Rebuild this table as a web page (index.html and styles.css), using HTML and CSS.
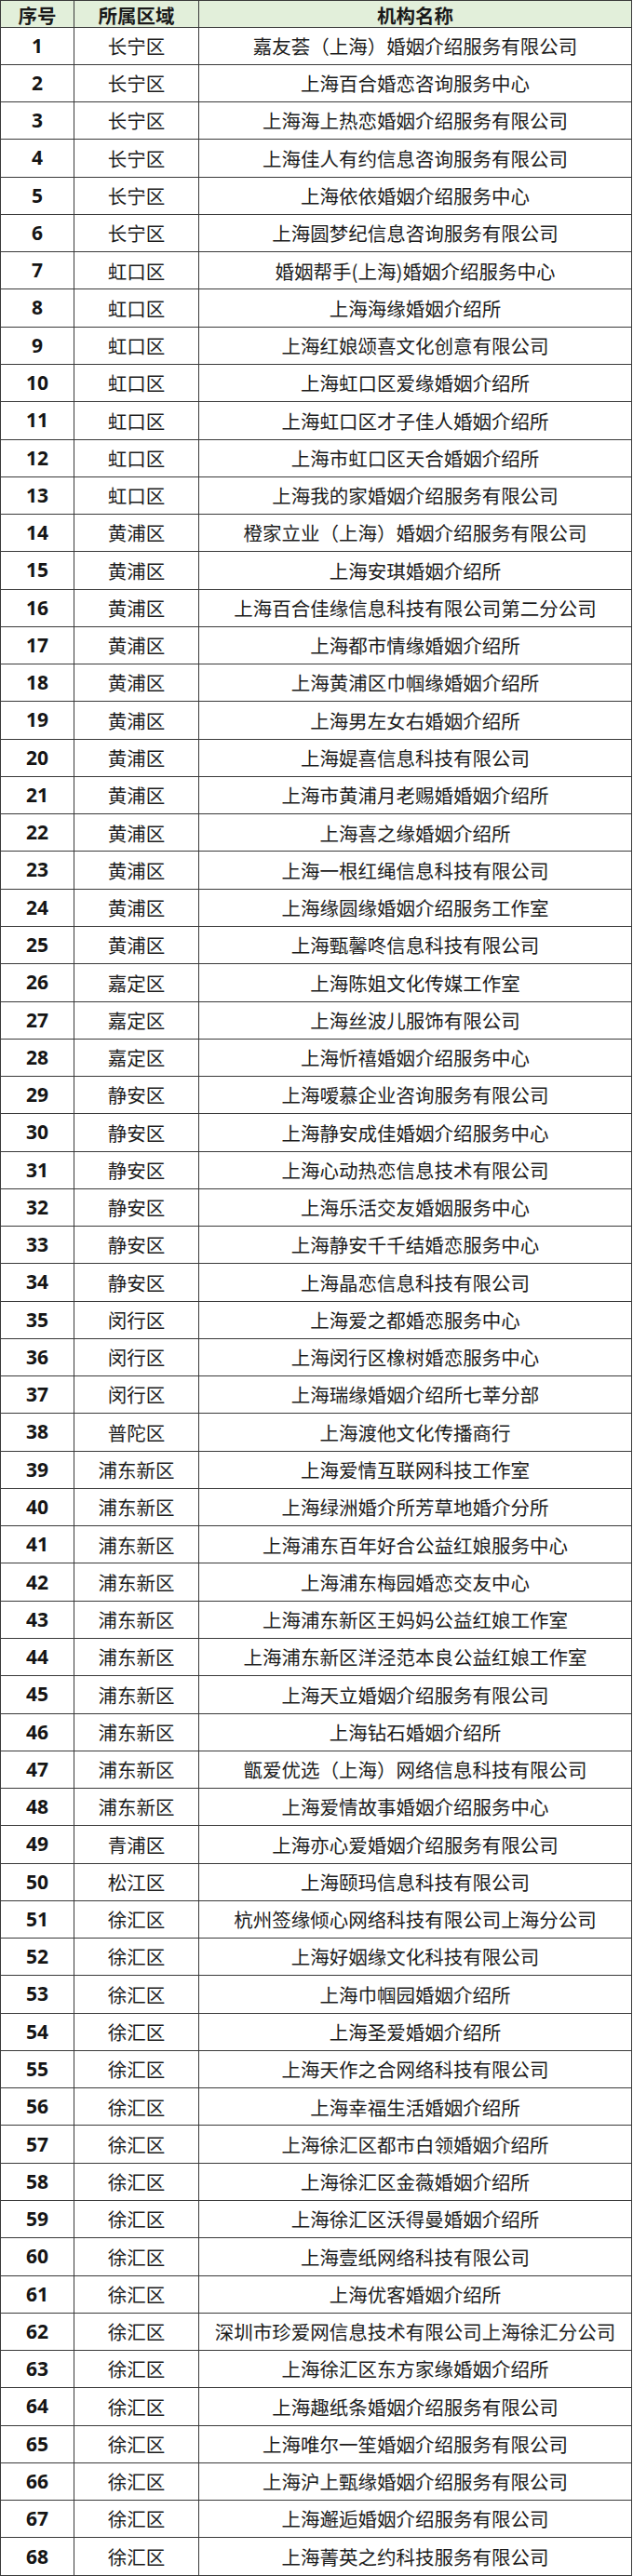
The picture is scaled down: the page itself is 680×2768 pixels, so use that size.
FILE: index.html
```html
<!DOCTYPE html>
<html lang="zh-CN">
<head>
<meta charset="utf-8">
<title>婚姻介绍机构名单</title>
<link rel="stylesheet" href="styles.css">
</head>
<body>
<table class="tbl">
<colgroup><col class="c-no"><col class="c-area"><col class="c-name"></colgroup>
<thead>
<tr><th>序号</th><th>所属区域</th><th>机构名称</th></tr>
</thead>
<tbody>
<tr><td class="no">1</td><td>长宁区</td><td>嘉友荟（上海）婚姻介绍服务有限公司</td></tr>
<tr><td class="no">2</td><td>长宁区</td><td>上海百合婚恋咨询服务中心</td></tr>
<tr><td class="no">3</td><td>长宁区</td><td>上海海上热恋婚姻介绍服务有限公司</td></tr>
<tr><td class="no">4</td><td>长宁区</td><td>上海佳人有约信息咨询服务有限公司</td></tr>
<tr><td class="no">5</td><td>长宁区</td><td>上海依依婚姻介绍服务中心</td></tr>
<tr><td class="no">6</td><td>长宁区</td><td>上海圆梦纪信息咨询服务有限公司</td></tr>
<tr><td class="no">7</td><td>虹口区</td><td>婚姻帮手(上海)婚姻介绍服务中心</td></tr>
<tr><td class="no">8</td><td>虹口区</td><td>上海海缘婚姻介绍所</td></tr>
<tr><td class="no">9</td><td>虹口区</td><td>上海红娘颂喜文化创意有限公司</td></tr>
<tr><td class="no">10</td><td>虹口区</td><td>上海虹口区爱缘婚姻介绍所</td></tr>
<tr><td class="no">11</td><td>虹口区</td><td>上海虹口区才子佳人婚姻介绍所</td></tr>
<tr><td class="no">12</td><td>虹口区</td><td>上海市虹口区天合婚姻介绍所</td></tr>
<tr><td class="no">13</td><td>虹口区</td><td>上海我的家婚姻介绍服务有限公司</td></tr>
<tr><td class="no">14</td><td>黄浦区</td><td>橙家立业（上海）婚姻介绍服务有限公司</td></tr>
<tr><td class="no">15</td><td>黄浦区</td><td>上海安琪婚姻介绍所</td></tr>
<tr><td class="no">16</td><td>黄浦区</td><td>上海百合佳缘信息科技有限公司第二分公司</td></tr>
<tr><td class="no">17</td><td>黄浦区</td><td>上海都市情缘婚姻介绍所</td></tr>
<tr><td class="no">18</td><td>黄浦区</td><td>上海黄浦区巾帼缘婚姻介绍所</td></tr>
<tr><td class="no">19</td><td>黄浦区</td><td>上海男左女右婚姻介绍所</td></tr>
<tr><td class="no">20</td><td>黄浦区</td><td>上海媞喜信息科技有限公司</td></tr>
<tr><td class="no">21</td><td>黄浦区</td><td>上海市黄浦月老赐婚婚姻介绍所</td></tr>
<tr><td class="no">22</td><td>黄浦区</td><td>上海喜之缘婚姻介绍所</td></tr>
<tr><td class="no">23</td><td>黄浦区</td><td>上海一根红绳信息科技有限公司</td></tr>
<tr><td class="no">24</td><td>黄浦区</td><td>上海缘圆缘婚姻介绍服务工作室</td></tr>
<tr><td class="no">25</td><td>黄浦区</td><td>上海甄馨咚信息科技有限公司</td></tr>
<tr><td class="no">26</td><td>嘉定区</td><td>上海陈姐文化传媒工作室</td></tr>
<tr><td class="no">27</td><td>嘉定区</td><td>上海丝波儿服饰有限公司</td></tr>
<tr><td class="no">28</td><td>嘉定区</td><td>上海忻禧婚姻介绍服务中心</td></tr>
<tr><td class="no">29</td><td>静安区</td><td>上海嗳慕企业咨询服务有限公司</td></tr>
<tr><td class="no">30</td><td>静安区</td><td>上海静安成佳婚姻介绍服务中心</td></tr>
<tr><td class="no">31</td><td>静安区</td><td>上海心动热恋信息技术有限公司</td></tr>
<tr><td class="no">32</td><td>静安区</td><td>上海乐活交友婚姻服务中心</td></tr>
<tr><td class="no">33</td><td>静安区</td><td>上海静安千千结婚恋服务中心</td></tr>
<tr><td class="no">34</td><td>静安区</td><td>上海晶恋信息科技有限公司</td></tr>
<tr><td class="no">35</td><td>闵行区</td><td>上海爱之都婚恋服务中心</td></tr>
<tr><td class="no">36</td><td>闵行区</td><td>上海闵行区橡树婚恋服务中心</td></tr>
<tr><td class="no">37</td><td>闵行区</td><td>上海瑞缘婚姻介绍所七莘分部</td></tr>
<tr><td class="no">38</td><td>普陀区</td><td>上海渡他文化传播商行</td></tr>
<tr><td class="no">39</td><td>浦东新区</td><td>上海爱情互联网科技工作室</td></tr>
<tr><td class="no">40</td><td>浦东新区</td><td>上海绿洲婚介所芳草地婚介分所</td></tr>
<tr><td class="no">41</td><td>浦东新区</td><td>上海浦东百年好合公益红娘服务中心</td></tr>
<tr><td class="no">42</td><td>浦东新区</td><td>上海浦东梅园婚恋交友中心</td></tr>
<tr><td class="no">43</td><td>浦东新区</td><td>上海浦东新区王妈妈公益红娘工作室</td></tr>
<tr><td class="no">44</td><td>浦东新区</td><td>上海浦东新区洋泾范本良公益红娘工作室</td></tr>
<tr><td class="no">45</td><td>浦东新区</td><td>上海天立婚姻介绍服务有限公司</td></tr>
<tr><td class="no">46</td><td>浦东新区</td><td>上海钻石婚姻介绍所</td></tr>
<tr><td class="no">47</td><td>浦东新区</td><td>甑爱优选（上海）网络信息科技有限公司</td></tr>
<tr><td class="no">48</td><td>浦东新区</td><td>上海爱情故事婚姻介绍服务中心</td></tr>
<tr><td class="no">49</td><td>青浦区</td><td>上海亦心爱婚姻介绍服务有限公司</td></tr>
<tr><td class="no">50</td><td>松江区</td><td>上海颐玛信息科技有限公司</td></tr>
<tr><td class="no">51</td><td>徐汇区</td><td>杭州签缘倾心网络科技有限公司上海分公司</td></tr>
<tr><td class="no">52</td><td>徐汇区</td><td>上海好姻缘文化科技有限公司</td></tr>
<tr><td class="no">53</td><td>徐汇区</td><td>上海巾帼园婚姻介绍所</td></tr>
<tr><td class="no">54</td><td>徐汇区</td><td>上海圣爱婚姻介绍所</td></tr>
<tr><td class="no">55</td><td>徐汇区</td><td>上海天作之合网络科技有限公司</td></tr>
<tr><td class="no">56</td><td>徐汇区</td><td>上海幸福生活婚姻介绍所</td></tr>
<tr><td class="no">57</td><td>徐汇区</td><td>上海徐汇区都市白领婚姻介绍所</td></tr>
<tr><td class="no">58</td><td>徐汇区</td><td>上海徐汇区金薇婚姻介绍所</td></tr>
<tr><td class="no">59</td><td>徐汇区</td><td>上海徐汇区沃得曼婚姻介绍所</td></tr>
<tr><td class="no">60</td><td>徐汇区</td><td>上海壹纸网络科技有限公司</td></tr>
<tr><td class="no">61</td><td>徐汇区</td><td>上海优客婚姻介绍所</td></tr>
<tr><td class="no">62</td><td>徐汇区</td><td>深圳市珍爱网信息技术有限公司上海徐汇分公司</td></tr>
<tr><td class="no">63</td><td>徐汇区</td><td>上海徐汇区东方家缘婚姻介绍所</td></tr>
<tr><td class="no">64</td><td>徐汇区</td><td>上海趣纸条婚姻介绍服务有限公司</td></tr>
<tr><td class="no">65</td><td>徐汇区</td><td>上海唯尔一笙婚姻介绍服务有限公司</td></tr>
<tr><td class="no">66</td><td>徐汇区</td><td>上海沪上甄缘婚姻介绍服务有限公司</td></tr>
<tr><td class="no">67</td><td>徐汇区</td><td>上海邂逅婚姻介绍服务有限公司</td></tr>
<tr><td class="no">68</td><td>徐汇区</td><td>上海菁英之约科技服务有限公司</td></tr>
</tbody>
</table>
</body>
</html>
```

FILE: styles.css
```css
html, body {
  margin: 0;
  padding: 0;
  background: #ffffff;
}

body {
  font-family: "Noto Sans CJK SC", "Noto Sans", sans-serif;
  color: #1c1c1c;
}

.tbl {
  width: 679px;
  height: 2768px;
  border-collapse: collapse;
  table-layout: fixed;
}

.c-no { width: 79px; }
.c-area { width: 134px; }

.tbl th,
.tbl td {
  border: 1px solid #3a3a3a;
  padding: 0;
  text-align: center;
  vertical-align: middle;
  font-size: 20.5px;
  line-height: 1.2;
  white-space: nowrap;
}

.tbl th {
  background: #e2efda;
  font-weight: 700;
  color: #1a1a1a;
  padding-top: 3px;
}

.tbl td {
  font-weight: 400;
}

.tbl td.no {
  font-family: "Open Sans", "DejaVu Sans", sans-serif;
  font-weight: 700;
  font-size: 21px;
  color: #151515;
}
```
